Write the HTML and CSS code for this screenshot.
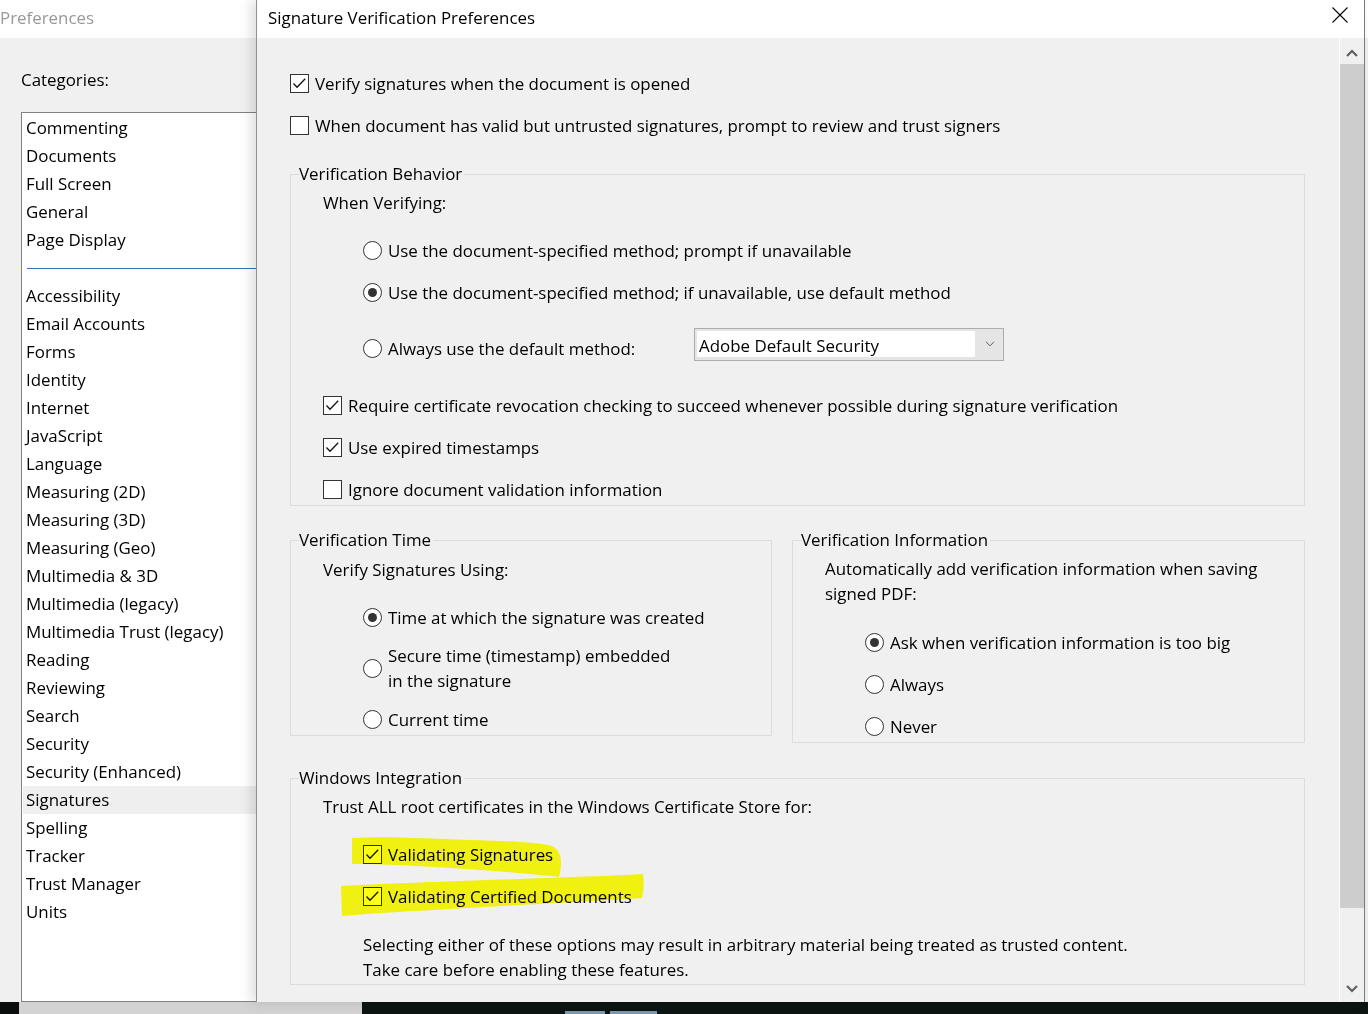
FILE: index.html
```html
<!DOCTYPE html>
<html>
<head>
<meta charset="utf-8">
<title>Signature Verification Preferences</title>
<link rel="stylesheet" href="styles.css">
</head>
<body>
<div class="screen">
  <div class="prefs">
    <div class="prefs-title">Preferences</div>
    <div class="prefs-body">
      <div class="cat-label">Categories:</div>
      <div class="cat-list">
        <div class="cat">Commenting</div>
        <div class="cat">Documents</div>
        <div class="cat">Full Screen</div>
        <div class="cat">General</div>
        <div class="cat">Page Display</div>
        <div class="cat-sep"></div>
        <div class="cat">Accessibility</div>
        <div class="cat">Email Accounts</div>
        <div class="cat">Forms</div>
        <div class="cat">Identity</div>
        <div class="cat">Internet</div>
        <div class="cat">JavaScript</div>
        <div class="cat">Language</div>
        <div class="cat">Measuring (2D)</div>
        <div class="cat">Measuring (3D)</div>
        <div class="cat">Measuring (Geo)</div>
        <div class="cat">Multimedia &amp; 3D</div>
        <div class="cat">Multimedia (legacy)</div>
        <div class="cat">Multimedia Trust (legacy)</div>
        <div class="cat">Reading</div>
        <div class="cat">Reviewing</div>
        <div class="cat">Search</div>
        <div class="cat">Security</div>
        <div class="cat">Security (Enhanced)</div>
        <div class="cat sel">Signatures</div>
        <div class="cat">Spelling</div>
        <div class="cat">Tracker</div>
        <div class="cat">Trust Manager</div>
        <div class="cat">Units</div>
      </div>
    </div>
  </div>
  <div class="taskbar">
    <div class="tb-dark-left"></div>
    <div class="tb-light"></div>
    <div class="tb-dark">
      <div class="tb-gap1"></div>
      <div class="tb-mark"></div>
      <div class="tb-gap2"></div>
      <div class="tb-mark tb-mark2"></div>
    </div>
  </div>

  <div class="dialog">
    <div class="dlg-title">
      <span class="dlg-title-text">Signature Verification Preferences</span>
      <svg class="close" width="16" height="16" viewBox="0 0 16 16"><path d="M0.5 0.5 L15.5 15.5 M15.5 0.5 L0.5 15.5" stroke="#000" stroke-width="1.1" fill="none"/></svg>
    </div>
    <div class="dlg-body">
      <div class="content">
        <div class="row">
          <span class="cb"><svg width="17" height="17" viewBox="0 0 17 17"><polyline points="2.5,8.5 6,12.2 14.2,3.8" fill="none" stroke="#111" stroke-width="1.3"/></svg></span>
          <span>Verify signatures when the document is opened</span>
        </div>
        <div class="row mt14">
          <span class="cb"></span>
          <span>When document has valid but untrusted signatures, prompt to review and trust signers</span>
        </div>

        <fieldset class="group mt23">
          <legend>Verification Behavior</legend>
          <div class="row ind1 mt2">When Verifying:</div>
          <div class="row ind2 mt20"><span class="rb"></span><span>Use the document-specified method; prompt if unavailable</span></div>
          <div class="row ind2 mt14"><span class="rb on"></span><span>Use the document-specified method; if unavailable, use default method</span></div>
          <div class="row-combo ind2">
            <div class="combo-label"><span class="rb"></span><span>Always use the default method:</span></div>
            <div class="combo">
              <div class="combo-field">Adobe Default Security</div>
              <div class="combo-arrow"><svg width="10" height="6" viewBox="0 0 10 6"><path d="M1 0.8 L5 4.8 L9 0.8" fill="none" stroke="#5a5a5a" stroke-width="1"/></svg></div>
            </div>
          </div>
          <div class="row ind1 mt29">
            <span class="cb"><svg width="17" height="17" viewBox="0 0 17 17"><polyline points="2.5,8.5 6,12.2 14.2,3.8" fill="none" stroke="#111" stroke-width="1.3"/></svg></span>
            <span>Require certificate revocation checking to succeed whenever possible during signature verification</span>
          </div>
          <div class="row ind1 mt14">
            <span class="cb"><svg width="17" height="17" viewBox="0 0 17 17"><polyline points="2.5,8.5 6,12.2 14.2,3.8" fill="none" stroke="#111" stroke-width="1.3"/></svg></span>
            <span>Use expired timestamps</span>
          </div>
          <div class="row ind1 mt14">
            <span class="cb"></span>
            <span>Ignore document validation information</span>
          </div>
        </fieldset>

        <div class="pair">
          <fieldset class="group vt">
            <legend>Verification Time</legend>
            <div class="row ind1 mt3">Verify Signatures Using:</div>
            <div class="row ind2 mt20"><span class="rb on"></span><span>Time at which the signature was created</span></div>
            <div class="row-multi ind2"><span class="rb"></span><span class="multi-text">Secure time (timestamp) embedded<br>in the signature</span></div>
            <div class="row ind2 mt12"><span class="rb"></span><span>Current time</span></div>
          </fieldset>
          <fieldset class="group vi">
            <legend>Verification Information</legend>
            <div class="vi-text ind1">Automatically add verification information when saving<br>signed PDF:</div>
            <div class="row ind2 mt22"><span class="rb on"></span><span>Ask when verification information is too big</span></div>
            <div class="row ind2 mt14"><span class="rb"></span><span>Always</span></div>
            <div class="row ind2 mt14"><span class="rb"></span><span>Never</span></div>
          </fieldset>
        </div>

        <fieldset class="group mt23">
          <legend>Windows Integration</legend>
          <div class="row ind1 mt2">Trust ALL root certificates in the Windows Certificate Store for:</div>
          <div class="hl-wrap mt20">
            <div class="row ind2">
              <span class="cb"><svg width="17" height="17" viewBox="0 0 17 17"><polyline points="2.5,8.5 6,12.2 14.2,3.8" fill="none" stroke="#111" stroke-width="1.3"/></svg></span>
              <span>Validating Signatures</span>
            </div>
            <div class="row ind2 mt14">
              <span class="cb"><svg width="17" height="17" viewBox="0 0 17 17"><polyline points="2.5,8.5 6,12.2 14.2,3.8" fill="none" stroke="#111" stroke-width="1.3"/></svg></span>
              <span>Validating Certified Documents</span>
            </div>
            <svg class="hl" width="330" height="90" viewBox="329 830 330 90">
              <path d="M352 838 C380 836 420 838 470 840 C505 841 535 842 552 846 C559 850 561 856 561 862 C561 868 560 873 559 877 C540 875 510 872 480 870 C440 867 400 865 370 864 L352 864 Z" fill="#ffff12"/>
              <path d="M341 886 C380 884 430 882 520 879 C570 877 610 876 643 874 C644 882 644 890 642 898 C610 900 560 903 520 905 C470 908 420 911 380 913 L342 916 Z" fill="#ffff12"/>
            </svg>
          </div>
          <div class="note ind2">Selecting either of these options may result in arbitrary material being treated as trusted content.<br>Take care before enabling these features.</div>
        </fieldset>
      </div>
      <div class="scrollbar">
        <div class="sb-btn sb-up"><svg width="12" height="8" viewBox="0 0 12 8"><path d="M1 7 L6 2 L11 7" fill="none" stroke="#606060" stroke-width="2.2"/></svg></div>
        <div class="sb-thumb"></div>
        <div class="sb-space"></div>
        <div class="sb-btn"><svg width="12" height="8" viewBox="0 0 12 8"><path d="M1 1 L6 6 L11 1" fill="none" stroke="#606060" stroke-width="2.2"/></svg></div>
      </div>
    </div>
  </div>
</div>
</body>
</html>
```

FILE: styles.css
```css
* { box-sizing: border-box; }
html, body { margin: 0; padding: 0; }
body {
  width: 1368px;
  height: 1014px;
  overflow: hidden;
  background: #0d1513;
  font-family: "Open Sans", "Noto Sans", sans-serif;
  font-size: 16.9px;
  color: #000;
}
.screen { position: relative; width: 1368px; height: 1014px; }

/* background Preferences window */
.prefs { height: 1002px; background: #f0f0f0; display: flex; flex-direction: column; }
.prefs-title { height: 38px; flex: none; background: #fff; color: #999; line-height: 35px; }
.prefs-body { flex: 1; min-height: 0; padding-left: 21px; display: flex; flex-direction: column; }
.cat-label { margin-top: 28px; height: 28px; line-height: 28px; }
.cat-list {
  margin-top: 18px;
  flex: 1;
  width: 320px;
  background: #fff;
  border: 1px solid #828282;
  border-right: none;
  padding-top: 1px;
}
.cat { height: 28px; line-height: 28px; padding-left: 4px; white-space: nowrap; }
.cat.sel { background: #efefef; margin-left: 1px; padding-left: 3px; }
.cat-sep { height: 28px; display: flex; align-items: center; padding-left: 5px; }
.cat-sep::after { content: ""; flex: 1; height: 1px; background: #2a78bf; }

/* bottom strip */
.taskbar { height: 12px; display: flex; }
.tb-dark-left { width: 19px; background: #0a0e0d; }
.tb-light { width: 343px; background: #d3d3d3; }
.tb-dark { flex: 1; background: #0d1513; display: flex; align-items: flex-end; }
.tb-gap1 { width: 203px; }
.tb-gap2 { width: 5px; }
.tb-mark { width: 40px; height: 3px; background: #7d98b0; }
.tb-mark2 { width: 47px; }

/* dialog */
.dialog {
  position: absolute;
  left: 256px;
  top: 0;
  width: 1109px;
  height: 1002px;
  background: #f0f0f0;
  border-left: 1px solid #8f8f8f;
  border-right: 1px solid #7a7a7a;
  box-shadow: -5px 0 12px rgba(0, 0, 0, 0.13);
  display: flex;
  flex-direction: column;
}
.dlg-title {
  height: 38px;
  flex: none;
  background: #fff;
  display: flex;
  justify-content: space-between;
  align-items: flex-start;
  padding: 0 16px 0 11px;
}
.dlg-title-text { line-height: 35px; }
.close { margin-top: 7px; display: block; }
.dlg-body { flex: 1; min-height: 0; display: flex; }
.content { flex: 1; min-width: 0; padding: 31px 34px 0 33px; overflow: hidden; }

.scrollbar { width: 25px; flex: none; border-left: 1px solid #fff; background: #f0f0f0; display: flex; flex-direction: column; }
.sb-btn { height: 26px; flex: none; display: flex; align-items: center; justify-content: center; }
.sb-btn svg { display: block; }
.sb-up { padding-top: 3px; }
.sb-thumb { height: 844px; flex: none; background: #cdcdcd; }
.sb-space { flex: 1; }

/* controls */
.row { display: flex; align-items: center; height: 28px; white-space: nowrap; }
.cb {
  width: 19px;
  height: 19px;
  flex: none;
  border: 1px solid #333;
  background: #fff;
  margin-right: 6px;
  display: block;
}
.cb svg { display: block; }
.rb {
  width: 19px;
  height: 19px;
  flex: none;
  border: 1px solid #333;
  border-radius: 50%;
  background: #fff;
  margin-right: 6px;
  display: flex;
  align-items: center;
  justify-content: center;
}
.rb.on::after { content: ""; width: 9px; height: 9px; border-radius: 50%; background: #333; }

.group { margin: 0; min-width: 0; border: 1px solid #dcdcdc; padding: 0 0 2px 8px; }
.group legend { padding: 0 2px 0 0; height: 24px; line-height: 24px; }
.ind1 { margin-left: 24px; }
.ind2 { margin-left: 64px; }
.mt2 { margin-top: 2px; }
.mt3 { margin-top: 3px; }
.mt12 { margin-top: 12px; }
.mt14 { margin-top: 14px; }
.mt20 { margin-top: 20px; }
.mt22 { margin-top: 22px; }
.mt23 { margin-top: 23px; }
.mt29 { margin-top: 29px; }

.row-combo { display: flex; align-items: flex-start; height: 34px; margin-top: 22px; }
.combo-label { display: flex; align-items: center; height: 28px; margin-top: 6px; width: 331px; flex: none; white-space: nowrap; }
.combo {
  width: 310px;
  height: 33px;
  flex: none;
  border: 1px solid #adadad;
  background: #e5e5e5;
  display: flex;
  padding: 2px 0 3px 2px;
}
.combo-field { width: 278px; background: #fff; line-height: 26px; padding: 2px 0 0 2px; white-space: nowrap; }
.combo-arrow { flex: 1; display: flex; align-items: center; justify-content: center; padding-left: 2px; }
.combo-arrow svg { display: block; }

.pair { display: flex; align-items: flex-start; margin-top: 22px; }
.vt { width: 482px; flex: none; }
.vi { flex: 1; margin-left: 20px; }
.row-multi { display: flex; align-items: center; margin-top: 12px; }
.multi-text { line-height: 25px; }
.vi-text { margin-top: 4px; line-height: 25px; }
.note { margin-top: 22px; line-height: 25px; }

.hl-wrap { position: relative; }
.hl { position: absolute; left: 30px; top: -10px; mix-blend-mode: multiply; pointer-events: none; }
```
